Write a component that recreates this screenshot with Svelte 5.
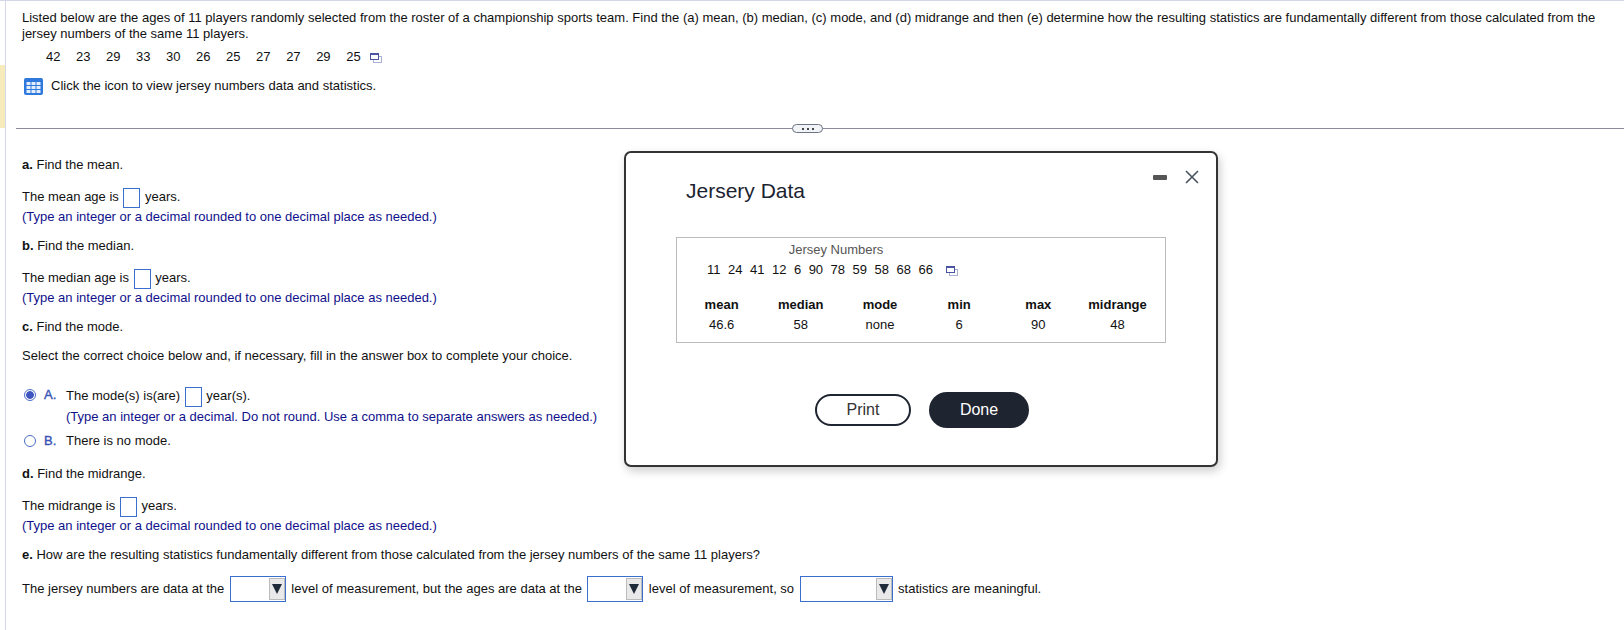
<script>
  const ages = [42, 23, 29, 33, 30, 26, 25, 27, 27, 29, 25];
  const jersey = [11, 24, 41, 12, 6, 90, 78, 59, 58, 68, 66];
  const stats = [
    { label: 'mean', value: '46.6' },
    { label: 'median', value: '58' },
    { label: 'mode', value: 'none' },
    { label: 'min', value: '6' },
    { label: 'max', value: '90' },
    { label: 'midrange', value: '48' },
  ];
</script>

{#snippet copyIcon()}
  <svg class="copy" width="12" height="10" viewBox="0 0 12 10">
    <rect x="3.5" y="3.5" width="8" height="6" fill="none" stroke="#aab0d4" />
    <rect x="0.5" y="0.5" width="8" height="6" fill="#fff" stroke="#4a55a2" />
    <rect x="0.5" y="0.5" width="8" height="1.5" fill="#4a55a2" />
  </svg>
{/snippet}

{#snippet blank()}
  <span class="blank"></span>
{/snippet}

{#snippet dropdown(width)}
  <span class="select" style="width: {width}px">
    <span class="arrow"><span class="tri"></span></span>
  </span>
{/snippet}

<main>
  <div class="marker"></div>

  <section class="question">
    <p class="intro">
      Listed below are the ages of 11 players randomly selected from the roster of a championship sports team. Find the (a) mean, (b) median, (c) mode, and (d) midrange and then (e) determine how the resulting statistics are fundamentally different from those calculated from the jersey numbers of the same 11 players.
    </p>
    <div class="ages">
      {#each ages as age}
        <span>{age}</span>
      {/each}
      {@render copyIcon()}
    </div>
    <div class="datalink">
      <svg width="19" height="17" viewBox="0 0 19 17">
        <rect width="19" height="17" rx="2" fill="#2f78dc" />
        <g fill="#e4eefc">
          <rect x="2.5" y="4" width="4" height="3" />
          <rect x="7.5" y="4" width="4" height="3" />
          <rect x="12.5" y="4" width="4" height="3" />
          <rect x="2.5" y="8" width="4" height="3" />
          <rect x="7.5" y="8" width="4" height="3" />
          <rect x="12.5" y="8" width="4" height="3" />
          <rect x="2.5" y="12" width="4" height="3" />
          <rect x="7.5" y="12" width="4" height="3" />
          <rect x="12.5" y="12" width="4" height="3" />
        </g>
      </svg>
      <span>Click the icon to view jersey numbers data and statistics.</span>
    </div>
  </section>

  <div class="divider">
    <span class="more"><i></i><i></i><i></i></span>
  </div>

  <section class="answers">
    <p class="head"><b>a.</b> Find the mean.</p>
    <p class="fill">The mean age is {@render blank()} years.</p>
    <p class="hint">(Type an integer or a decimal rounded to one decimal place as needed.)</p>

    <p class="head next"><b>b.</b> Find the median.</p>
    <p class="fill">The median age is {@render blank()} years.</p>
    <p class="hint">(Type an integer or a decimal rounded to one decimal place as needed.)</p>

    <p class="head next"><b>c.</b> Find the mode.</p>
    <p class="select-text">Select the correct choice below and, if necessary, fill in the answer box to complete your choice.</p>

    <div class="choice first">
      <span class="radio on"></span>
      <b class="letter">A.</b>
      <div>
        <p>The mode(s) is(are) {@render blank()} year(s).</p>
        <p class="hint">(Type an integer or a decimal. Do not round. Use a comma to separate answers as needed.)</p>
      </div>
    </div>
    <div class="choice">
      <span class="radio"></span>
      <b class="letter">B.</b>
      <p>There is no mode.</p>
    </div>

    <p class="head next after-choice"><b>d.</b> Find the midrange.</p>
    <p class="fill">The midrange is {@render blank()} years.</p>
    <p class="hint">(Type an integer or a decimal rounded to one decimal place as needed.)</p>

    <p class="head next"><b>e.</b> How are the resulting statistics fundamentally different from those calculated from the jersey numbers of the same 11 players?</p>
    <div class="sentence">
      <span>The jersey numbers are data at the</span>
      {@render dropdown(56)}
      <span>level of measurement, but the ages are data at the</span>
      {@render dropdown(56)}
      <span>level of measurement, so</span>
      {@render dropdown(93)}
      <span>statistics are meaningful.</span>
    </div>
  </section>

  <div class="modal">
    <div class="controls">
      <span class="minimize"></span>
      <svg width="14" height="14" viewBox="0 0 14 14">
        <path d="M1 1 L13 13 M13 1 L1 13" stroke="#4a5360" stroke-width="1.6" fill="none" />
      </svg>
    </div>
    <h2>Jersery Data</h2>
    <div class="databox">
      <div class="caption">Jersey Numbers</div>
      <div class="numbers">
        {#each jersey as n}
          <span>{n}</span>
        {/each}
        {@render copyIcon()}
      </div>
      <div class="stats">
        {#each stats as s}
          <div>
            <b>{s.label}</b>
            <span>{s.value}</span>
          </div>
        {/each}
      </div>
    </div>
    <div class="buttons">
      <button class="print">Print</button>
      <button class="done">Done</button>
    </div>
  </div>
</main>

<style>
  :global(body) {
    margin: 0;
    background: #fff;
  }

  main {
    position: relative;
    height: 630px;
    box-sizing: border-box;
    overflow: hidden;
    border-top: 1px solid #d3d7e6;
    font-family: "Liberation Sans", Arial, sans-serif;
    font-size: 13px;
    line-height: 16px;
    color: #111;
  }

  main::before {
    content: '';
    position: absolute;
    left: 5px;
    top: 0;
    bottom: 0;
    width: 1px;
    background: #d3d7e6;
  }

  .marker {
    position: absolute;
    left: 0;
    top: 64px;
    width: 5px;
    height: 63px;
    background: #f8ebbb;
  }

  p {
    margin: 0;
  }

  .question {
    padding: 9px 16px 0 22px;
  }

  .ages {
    display: flex;
    align-items: center;
    gap: 15.55px;
    margin: 7px 0 0 24px;
    height: 16px;
  }

  .ages .copy {
    margin-left: -6.5px;
    margin-top: 2px;
  }

  .copy {
    display: block;
  }

  .datalink {
    display: flex;
    align-items: center;
    gap: 8px;
    margin: 12px 0 0 2px;
    height: 18px;
  }

  .divider {
    position: relative;
    margin: 33px 0 0 16px;
    height: 1px;
    background: #8a8d99;
  }

  .more {
    position: absolute;
    left: 776px;
    top: -4px;
    width: 29px;
    height: 7px;
    display: flex;
    align-items: center;
    justify-content: center;
    gap: 3px;
    background: #f1f3f6;
    border: 1px solid #6c7584;
    border-radius: 5px;
  }

  .more i {
    width: 2px;
    height: 2px;
    background: #3f4650;
  }

  .answers {
    padding: 28px 0 0 22px;
  }

  .next {
    margin-top: 13px;
  }

  .after-choice {
    margin-top: 17px;
  }

  .fill {
    margin-top: 14px;
    height: 20px;
    line-height: 20px;
  }

  .hint {
    color: #10108c;
    margin-top: 2px;
  }

  .select-text {
    margin-top: 13px;
  }

  .blank {
    display: inline-block;
    width: 17px;
    height: 20px;
    margin: 0 1px;
    box-sizing: border-box;
    border: 1px solid #3a6fd0;
    vertical-align: middle;
    background: #fff;
  }

  .choice {
    display: flex;
    align-items: flex-start;
    margin-top: 8px;
    padding-left: 2px;
  }

  .choice.first {
    margin-top: 23px;
  }

  .radio {
    width: 10px;
    height: 10px;
    margin-top: 2px;
    border: 1px solid #4a6ec8;
    border-radius: 50%;
    background: #fff;
    flex: none;
  }

  .radio.on {
    background: radial-gradient(circle, #3f55c0 0 3.5px, #fff 4.2px);
  }

  .letter {
    width: 22px;
    margin-left: 8px;
    color: #3a55b5;
    font-weight: normal;
    -webkit-text-stroke: 0.4px #3a55b5;
  }

  .sentence {
    display: flex;
    align-items: center;
    gap: 5.5px;
    margin-top: 13px;
    height: 26px;
  }

  .select {
    position: relative;
    display: block;
    height: 26px;
    box-sizing: border-box;
    border: 1px solid #3a6fd0;
    background: #fff;
  }

  .arrow {
    position: absolute;
    right: 0;
    top: 1px;
    bottom: 1px;
    width: 16px;
    display: flex;
    align-items: center;
    justify-content: center;
    background: #e9e9e9;
    border: 1px solid #bbb;
    box-sizing: border-box;
  }

  .tri {
    width: 0;
    height: 0;
    border-left: 5px solid transparent;
    border-right: 5px solid transparent;
    border-top: 10px solid #1f2b38;
  }

  .modal {
    position: absolute;
    left: 624px;
    top: 150px;
    width: 594px;
    height: 316px;
    box-sizing: border-box;
    background: #fff;
    border: 2px solid #333;
    border-radius: 7px;
    box-shadow: 2px 4px 10px rgba(0, 0, 0, 0.2);
  }

  .controls {
    position: absolute;
    right: 17px;
    top: 17px;
    display: flex;
    align-items: center;
    gap: 18px;
  }

  .minimize {
    width: 14px;
    height: 5px;
    border-radius: 1px;
    background: #555;
  }

  h2 {
    margin: 0;
    padding: 26px 0 0 60px;
    font-size: 21px;
    font-weight: normal;
    line-height: 24px;
    color: #1c2330;
  }

  .databox {
    margin: 34px 0 0 50px;
    width: 490px;
    height: 106px;
    box-sizing: border-box;
    border: 1px solid #bbb;
    padding-top: 5px;
  }

  .caption {
    width: 318px;
    text-align: center;
    color: #555;
    line-height: 14px;
  }

  .numbers {
    display: flex;
    align-items: center;
    gap: 7.5px;
    margin: 5px 0 0 30px;
    height: 16px;
  }

  .numbers .copy {
    margin-left: 6px;
    margin-top: 2px;
  }

  .stats {
    display: grid;
    grid-template-columns: repeat(6, 79.2px);
    margin: 19px 0 0 5px;
  }

  .stats div {
    display: flex;
    flex-direction: column;
    align-items: center;
    gap: 4px;
    line-height: 16px;
  }

  .buttons {
    display: flex;
    align-items: center;
    gap: 18px;
    margin: 49px 0 0 189px;
  }

  button {
    font-family: inherit;
    font-size: 16px;
    padding: 0;
    border-radius: 18px;
    box-sizing: border-box;
  }

  .print {
    width: 96px;
    height: 32px;
    background: #fff;
    color: #333;
    border: 2px solid #1f2530;
  }

  .done {
    width: 100px;
    height: 36px;
    background: #1f2530;
    color: #fff;
    border: none;
  }
</style>
